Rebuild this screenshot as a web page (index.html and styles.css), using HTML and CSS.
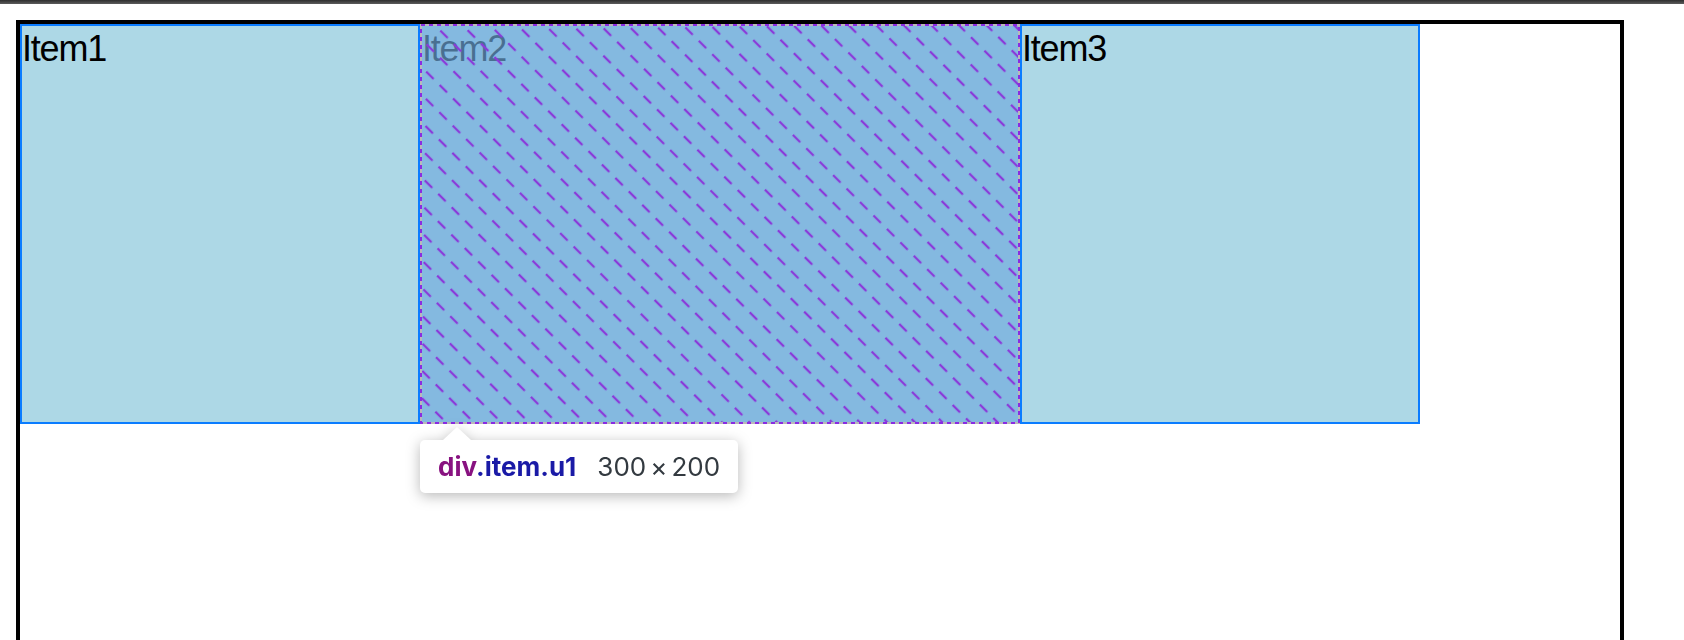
FILE: index.html
```html
<!DOCTYPE html>
<html lang="en">
<head>
<meta charset="utf-8">
<title>Flex items</title>
<link rel="stylesheet" href="styles.css">
</head>
<body>
<div class="chrome-bar"></div>
<main class="stage">
  <div class="container">
    <div class="item">Item1</div>
    <div class="item u1">Item2
      <div class="inspect-overlay">
        <svg class="inspect-svg" xmlns="http://www.w3.org/2000/svg">
          <defs>
            <pattern id="hatch" width="19" height="19.5" patternUnits="userSpaceOnUse" patternTransform="rotate(45)">
              <line x1="0" y1="9.75" x2="10.5" y2="9.75" stroke="#8a3ad9" stroke-width="2.3"/>
            </pattern>
          </defs>
          <rect class="hatch-fill" width="100%" height="100%" fill="url(#hatch)"/>
          <rect class="edge edge-base"/>
          <rect class="edge edge-dash"/>
        </svg>
      </div>
      <div class="inspect-tooltip">
        <span class="sel"><span class="tag">div</span><span class="cls">.item.u1</span></span>
        <span class="dims">300<span class="times">×</span>200</span>
      </div>
    </div>
    <div class="item">Item3</div>
  </div>
</main>
</body>
</html>
```
FILE: styles.css
```css
html, body {
  margin: 0;
  background: #ffffff;
  overflow: hidden;
}

body {
  font-family: "Liberation Sans", Arial, Helvetica, sans-serif;
  color: #000;
}

.chrome-bar {
  height: 4px;
  background: linear-gradient(#2e2e2e, #5c5c5c);
}

.stage {
  padding: 16px 0 0 16px;
}

.container {
  display: flex;
  width: 1600px;
  height: 700px;
  border: 4px solid #000;
}

.item {
  position: relative;
  flex: none;
  box-sizing: border-box;
  width: 400px;
  height: 400px;
  background: #add8e6;
  border: 2px solid #0a7cff;
  font-size: 36px;
  line-height: 1.3;
  letter-spacing: -1.2px;
}

.u1 {
  width: 600px;
}

.inspect-overlay {
  position: absolute;
  inset: -2px;
  background: rgba(111, 168, 220, 0.66);
}

.inspect-svg {
  display: block;
  width: 100%;
  height: 100%;
}

.edge {
  x: 1px;
  y: 1px;
  width: calc(100% - 2px);
  height: calc(100% - 2px);
  fill: none;
  stroke-width: 2px;
}

.edge-base {
  stroke: #b9b9b9;
}

.edge-dash {
  stroke: #8a2be2;
  stroke-dasharray: 4 4;
}

.inspect-tooltip {
  position: absolute;
  left: -2px;
  top: calc(100% + 18px);
  display: flex;
  align-items: center;
  gap: 21px;
  height: 53px;
  padding: 0 18px;
  background: #fff;
  border-radius: 5px;
  filter: drop-shadow(0 3px 7px rgba(0, 0, 0, 0.28));
  font-family: Inter, "Noto Sans", sans-serif;
  font-size: 26px;
  line-height: 1;
  letter-spacing: 0;
  white-space: nowrap;
}

.inspect-tooltip::before {
  content: "";
  position: absolute;
  left: 23px;
  top: -13px;
  border-left: 14px solid transparent;
  border-right: 14px solid transparent;
  border-bottom: 13px solid #fff;
}

.sel {
  font-weight: 700;
}

.tag {
  color: #881280;
}

.cls {
  color: #1a1aa6;
}

.dims {
  color: #333a40;
}

.times {
  margin: 0 4px;
}
```
